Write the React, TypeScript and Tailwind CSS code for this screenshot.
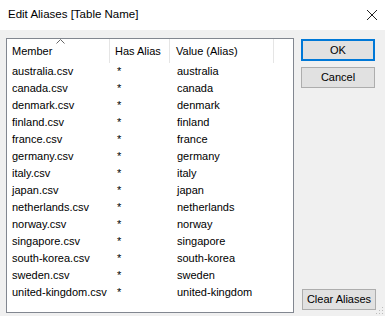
import React from "react";

const rows = [
  "australia",
  "canada",
  "denmark",
  "finland",
  "france",
  "germany",
  "italy",
  "japan",
  "netherlands",
  "norway",
  "singapore",
  "south-korea",
  "sweden",
  "united-kingdom",
];

export default function App() {
  return (
    <div
      className="w-[385px] h-[316px] bg-[#f0f0f0] flex flex-col text-[11px] text-black overflow-hidden relative"
      style={{ fontFamily: '"Liberation Sans", Arial, sans-serif' }}
    >
      <div className="h-[30px] bg-white flex items-center justify-between pl-[8px] pr-[7px] shrink-0">
        <span className="text-[11.5px] leading-none text-black">Edit Aliases [Table Name]</span>
        <svg width="12" height="12" viewBox="0 0 12 12">
          <path d="M1 1 L11 11 M11 1 L1 11" stroke="#222" strokeWidth="1" fill="none" />
        </svg>
      </div>
      <div className="flex flex-1 pt-[8px] pl-[6px] pr-[9px] pb-[4px] gap-[7px]">
        <div className="w-[288px] h-[275px] bg-white border border-[#828790] flex flex-col">
          <div className="h-[24px] flex shrink-0 relative">
            <div className="w-[103px] h-full border-r border-[#e5e5e5] flex items-center pl-[5px] relative">
              <span>Member</span>
              <svg width="9" height="5" viewBox="0 0 9 5" className="absolute left-[49px] top-[0px]">
                <path d="M0.5 4.5 L4.5 0.5 L8.5 4.5" stroke="#666" strokeWidth="1" fill="none" />
              </svg>
            </div>
            <div className="w-[60px] h-full border-r border-[#e5e5e5] flex items-center pl-[5px]">
              <span>Has Alias</span>
            </div>
            <div className="w-[104px] h-full border-r border-[#e5e5e5] flex items-center pl-[6px]">
              <span>Value (Alias)</span>
            </div>
          </div>
          <div className="flex flex-col">
            {rows.map((r) => (
              <div key={r} className="h-[17px] flex items-center leading-none">
                <div className="w-[104px] pl-[5px] whitespace-nowrap">{r}.csv</div>
                <div className="w-[60px] pl-[6px]">*</div>
                <div className="pl-[6px] whitespace-nowrap">{r}</div>
              </div>
            ))}
          </div>
        </div>
        <div className="flex flex-col w-[75px] pt-[1px]">
          <button className="h-[22px] w-[74px] bg-[#e1e1e1] border-2 border-[#0078d7] flex items-center justify-center leading-none">
            OK
          </button>
          <button className="mt-[6px] h-[21px] w-[74px] bg-[#e1e1e1] border border-[#adadad] flex items-center justify-center leading-none">
            Cancel
          </button>
          <div className="flex-1" />
          <button className="h-[21px] w-[74px] bg-[#e1e1e1] border border-[#adadad] flex items-center justify-center leading-none mb-[3px] ml-[1px]">
            Clear Aliases
          </button>
        </div>
      </div>
      <svg width="10" height="10" viewBox="0 0 10 10" className="absolute right-[1px] bottom-[1px]">
        <rect x="8" y="2" width="1" height="1" fill="#bcbcbc" />
        <rect x="5" y="5" width="1" height="1" fill="#bcbcbc" />
        <rect x="8" y="5" width="1" height="1" fill="#bcbcbc" />
        <rect x="2" y="8" width="1" height="1" fill="#bcbcbc" />
        <rect x="5" y="8" width="1" height="1" fill="#bcbcbc" />
        <rect x="8" y="8" width="1" height="1" fill="#bcbcbc" />
      </svg>
    </div>
  );
}
